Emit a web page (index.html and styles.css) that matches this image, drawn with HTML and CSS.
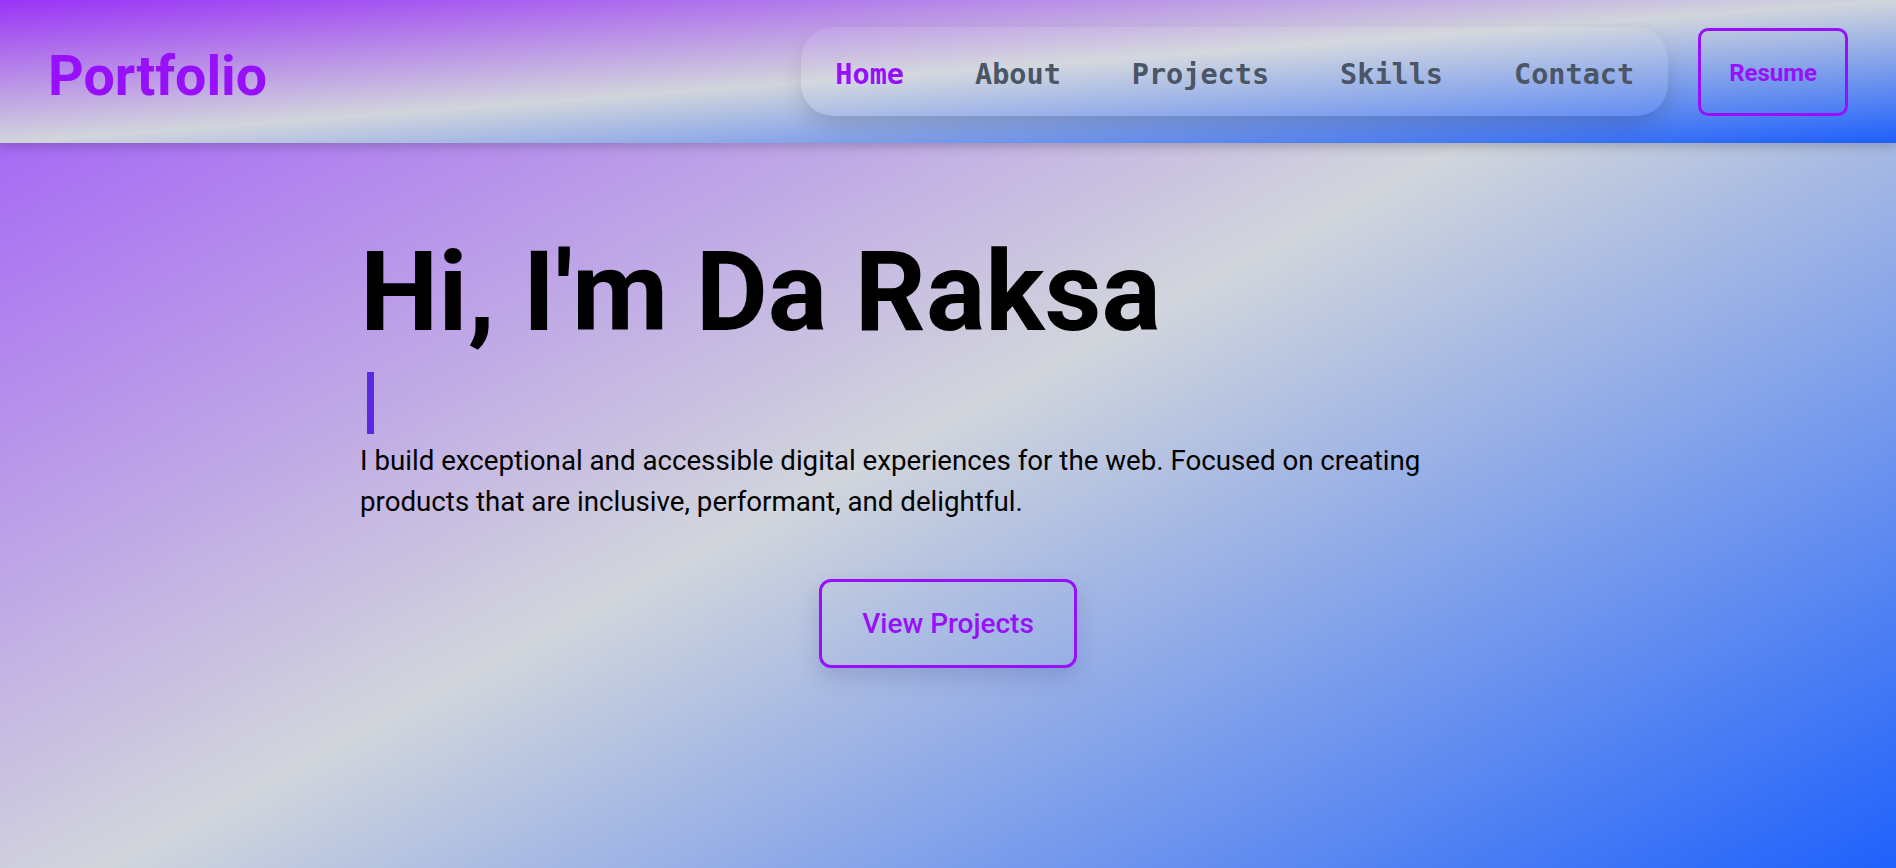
FILE: index.html
```html
<!DOCTYPE html>
<html lang="en">
<head>
<meta charset="utf-8">
<title>Portfolio</title>
<link rel="stylesheet" href="styles.css">
</head>
<body>
<header class="site-header">
  <a class="logo" href="#">Portfolio</a>
  <div class="header-right">
    <nav class="nav-pill">
      <a class="nav-link active" href="#">Home</a>
      <a class="nav-link" href="#">About</a>
      <a class="nav-link" href="#">Projects</a>
      <a class="nav-link" href="#">Skills</a>
      <a class="nav-link" href="#">Contact</a>
    </nav>
    <a class="resume-btn" href="#">Resume</a>
  </div>
</header>
<main class="hero">
  <div class="hero-inner">
    <h1 class="hero-title">Hi, I'm Da Raksa</h1>
    <div class="typed"><span class="cursor"></span></div>
    <p class="hero-text">I build exceptional and accessible digital experiences for the web. Focused on creating products that are inclusive, performant, and delightful.</p>
    <div class="hero-actions">
      <a class="cta-btn" href="#">View Projects</a>
    </div>
  </div>
</main>
</body>
</html>
```

FILE: styles.css
```css
* { box-sizing: border-box; }

html, body {
  margin: 0;
  padding: 0;
}

body {
  font-family: Roboto, "Liberation Sans", sans-serif;
  color: #000;
  min-height: 100vh;
  display: flex;
  flex-direction: column;
  overflow: hidden;
}

a { text-decoration: none; }

.site-header {
  height: 143px;
  flex: 0 0 auto;
  display: flex;
  align-items: center;
  padding: 0 48px;
  background: linear-gradient(to bottom right, #9a33f6 0%, #d1d5dc 50%, #1d5ffc 100%);
  box-shadow: 0 4px 10px rgba(0, 0, 0, 0.18);
  position: relative;
  z-index: 2;
}

.logo {
  font-family: Roboto, "Liberation Sans", sans-serif;
  font-weight: 700;
  font-size: 55.5px;
  line-height: 1;
  margin-top: 10px;
  color: #9810fa;
}

.header-right {
  margin-left: auto;
  display: flex;
  align-items: center;
  gap: 30px;
}

.nav-pill {
  display: flex;
  align-items: center;
  gap: 71px;
  height: 89px;
  padding: 0 34px;
  border-radius: 32px;
  background: rgba(255, 255, 255, 0.08);
  box-shadow: 0 12px 28px -6px rgba(0, 0, 0, 0.2);
}

.nav-link {
  font-family: "DejaVu Sans Mono", "Liberation Mono", monospace;
  font-weight: 700;
  font-size: 28.5px;
  line-height: 1;
  padding-top: 7px;
  color: #4a5565;
}

.nav-link.active {
  color: #9810fa;
}

.resume-btn {
  display: block;
  font-weight: 700;
  font-size: 24px;
  line-height: 28px;
  padding: 28px 28px 26px;
  color: #9810fa;
  border: 3px solid #9810fa;
  border-radius: 10px;
}

.hero {
  flex: 1 1 auto;
  min-height: 725px;
  background: linear-gradient(152deg, #a76af4 0%, #d1d5dc 45%, #1f61fc 100%);
}

.hero-inner {
  max-width: 1176px;
  margin: 0 auto;
  padding-top: 95px;
}

.hero-title {
  margin: 0;
  font-weight: 700;
  font-size: 111px;
  line-height: 108px;
  color: #000;
}

.typed {
  margin-top: 26px;
  height: 62px;
}

.cursor {
  display: block;
  width: 7px;
  height: 62px;
  margin-left: 7px;
  background: #5a2ae2;
}

.hero-text {
  margin: 6px 0 0;
  max-width: 1150px;
  font-size: 27.7px;
  line-height: 41px;
  color: #000;
}

.hero-actions {
  display: flex;
  justify-content: center;
  margin-top: 57px;
}

.cta-btn {
  display: block;
  font-weight: 500;
  font-size: 28px;
  line-height: 35px;
  padding: 24px 40px;
  color: #9810fa;
  border: 3px solid #9810fa;
  border-radius: 12px;
  box-shadow: 0 10px 22px rgba(40, 40, 120, 0.18);
}
```
